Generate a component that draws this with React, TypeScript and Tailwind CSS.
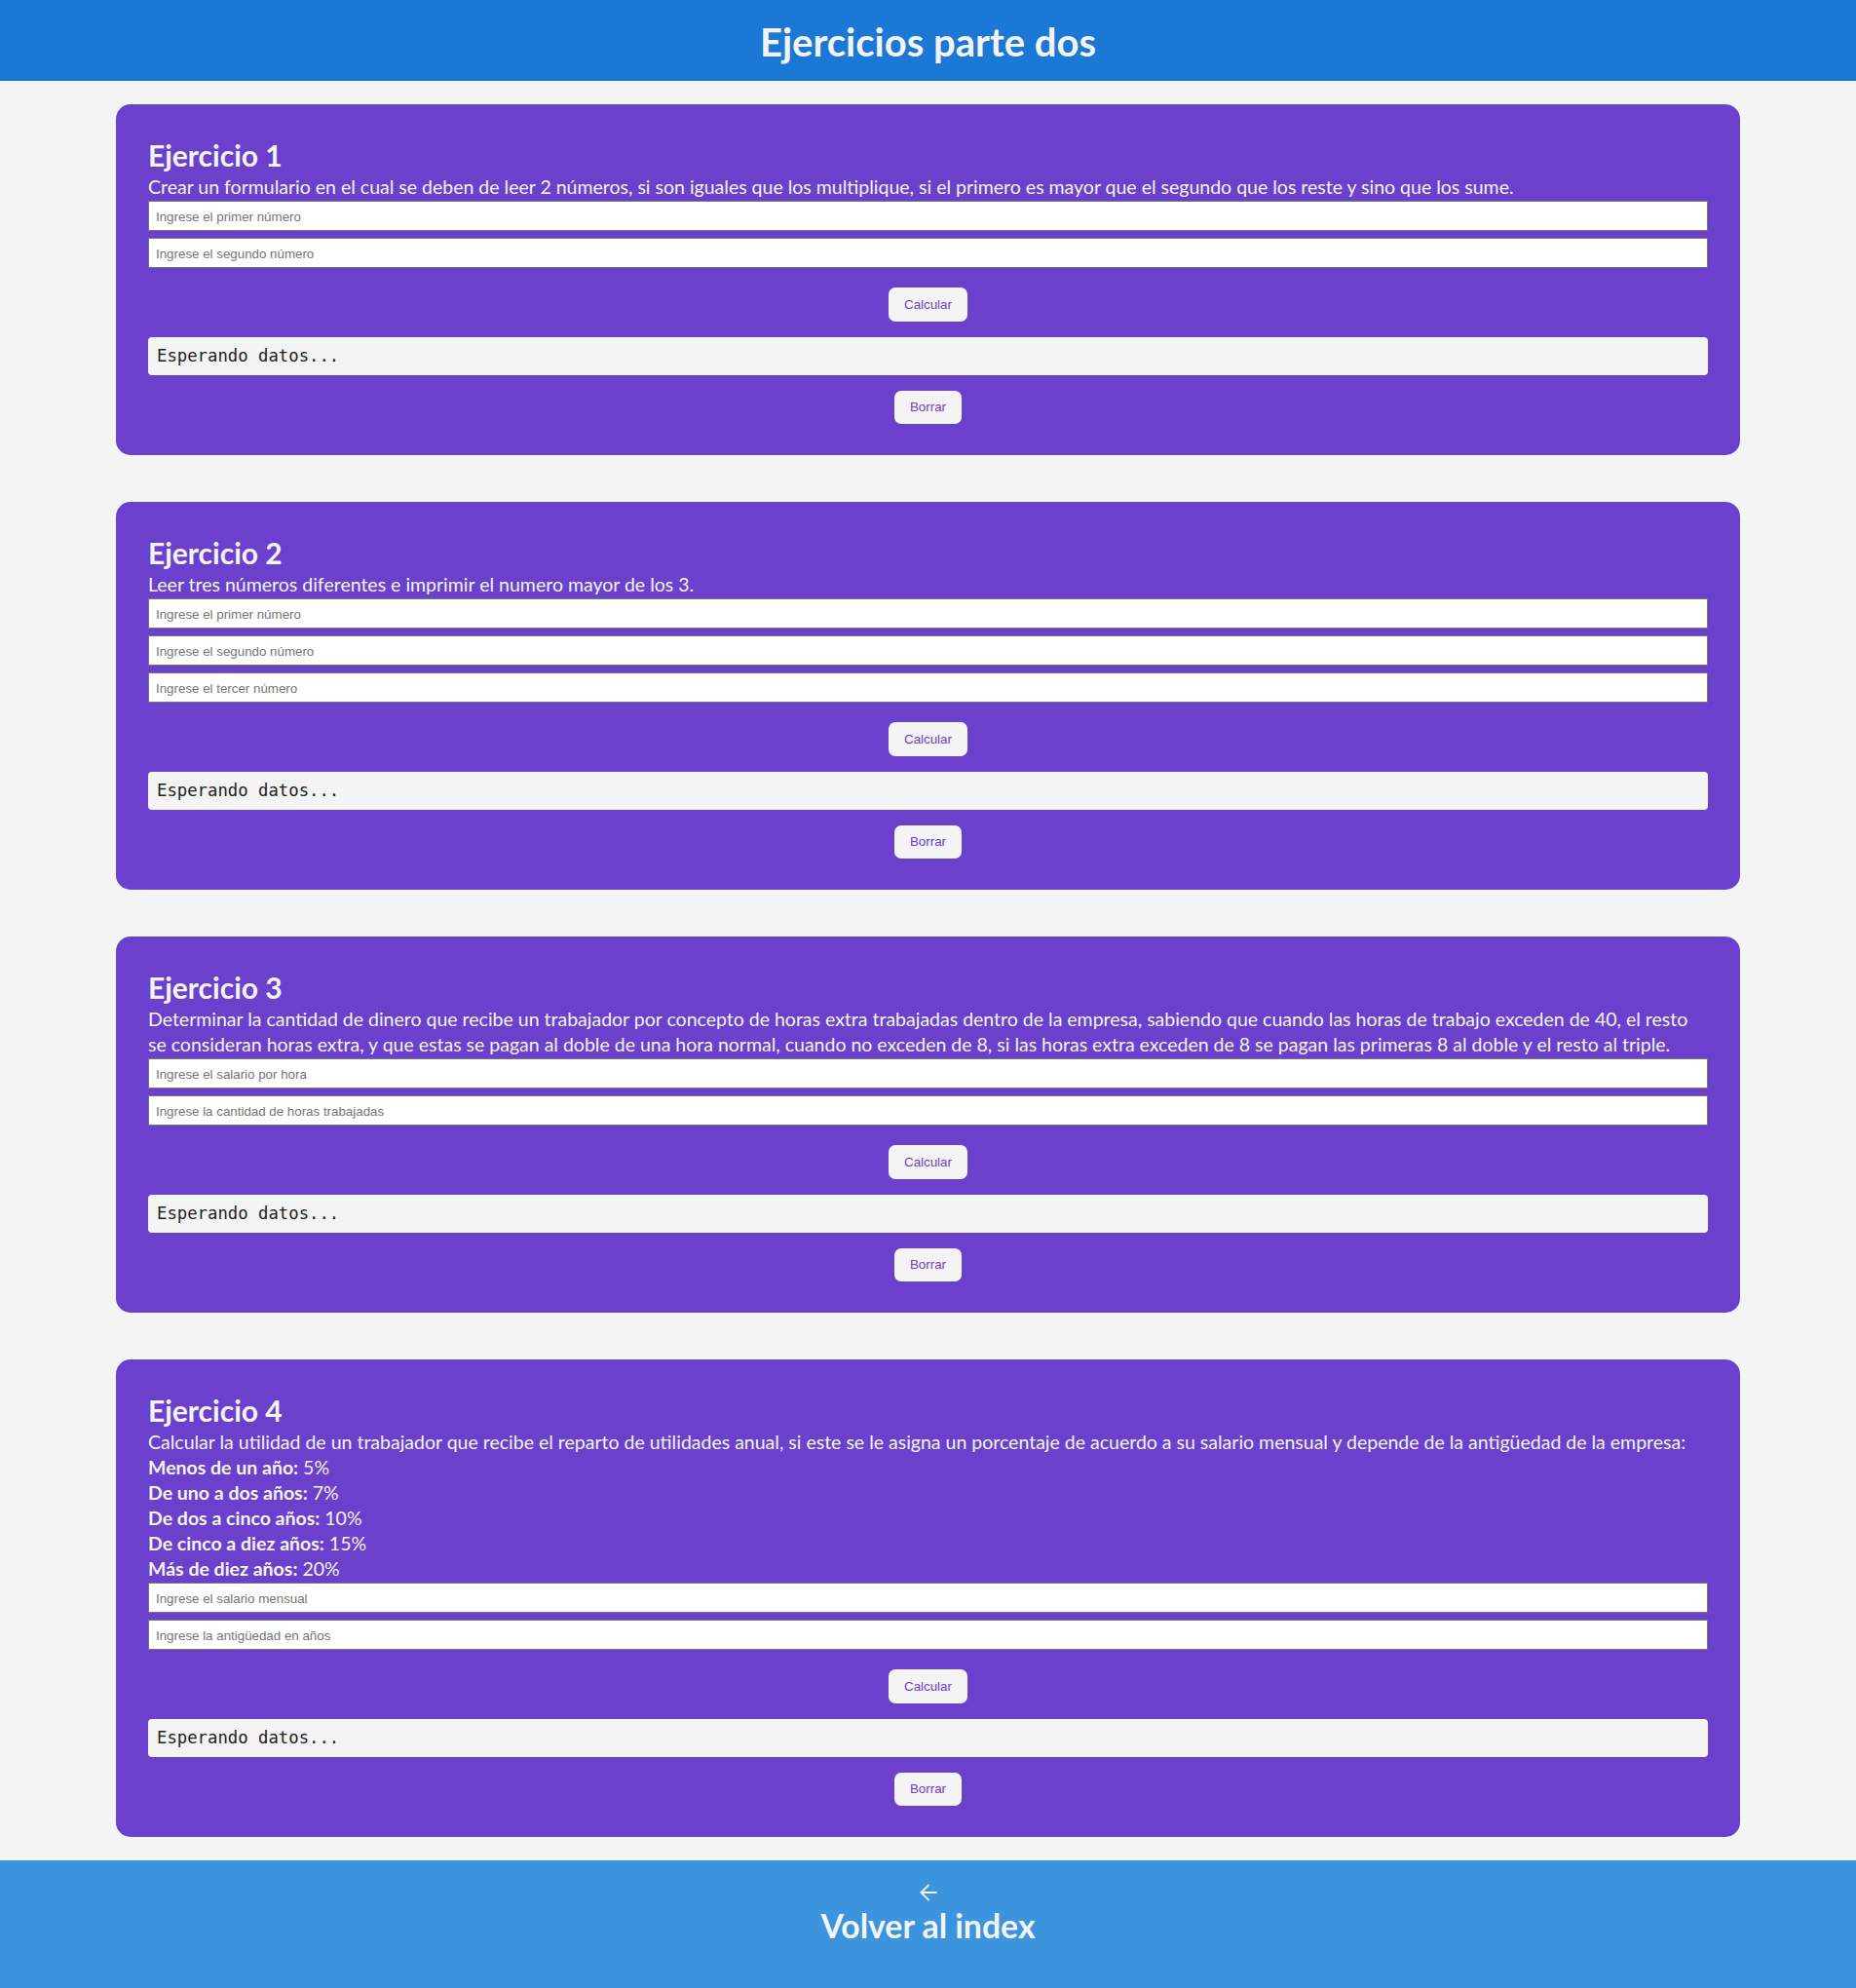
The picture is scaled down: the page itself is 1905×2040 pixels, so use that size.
import React from "react";

type Ex = {
  title: string;
  desc: React.ReactNode;
  inputs: string[];
};

const exercises: Ex[] = [
  {
    title: "Ejercicio 1",
    desc: (
      <p>
        Crear un formulario en el cual se deben de leer 2 números, si son iguales que los multiplique, si el primero es mayor que el segundo que los reste y sino que los sume.
      </p>
    ),
    inputs: ["Ingrese el primer número", "Ingrese el segundo número"],
  },
  {
    title: "Ejercicio 2",
    desc: <p>Leer tres números diferentes e imprimir el numero mayor de los 3.</p>,
    inputs: ["Ingrese el primer número", "Ingrese el segundo número", "Ingrese el tercer número"],
  },
  {
    title: "Ejercicio 3",
    desc: (
      <p>
        Determinar la cantidad de dinero que recibe un trabajador por concepto de horas extra trabajadas dentro de la empresa, sabiendo que cuando las horas de trabajo exceden de 40, el resto
        <br />
        se consideran horas extra, y que estas se pagan al doble de una hora normal, cuando no exceden de 8, si las horas extra exceden de 8 se pagan las primeras 8 al doble y el resto al triple.
      </p>
    ),
    inputs: ["Ingrese el salario por hora", "Ingrese la cantidad de horas trabajadas"],
  },
  {
    title: "Ejercicio 4",
    desc: (
      <p>
        Calcular la utilidad de un trabajador que recibe el reparto de utilidades anual, si este se le asigna un porcentaje de acuerdo a su salario mensual y depende de la antigüedad de la empresa:
        <br />
        <strong className="font-bold">Menos de un año:</strong> 5%
        <br />
        <strong className="font-bold">De uno a dos años:</strong> 7%
        <br />
        <strong className="font-bold">De dos a cinco años:</strong> 10%
        <br />
        <strong className="font-bold">De cinco a diez años:</strong> 15%
        <br />
        <strong className="font-bold">Más de diez años:</strong> 20%
      </p>
    ),
    inputs: ["Ingrese el salario mensual", "Ingrese la antigüedad en años"],
  },
];

function Card({ ex }: { ex: Ex }) {
  return (
    <section className="w-[1667px] mx-auto bg-[#6a40cc] rounded-[15px] px-[33px] pt-8 pb-8 text-[#f4f4f4] font-['Lato',sans-serif]">
      <h2 className="text-[30px] leading-[40px] font-bold">{ex.title}</h2>
      <div className="text-[19.5px] leading-[26px]">{ex.desc}</div>
      <div className="mt-[1px] flex flex-col gap-[7px]">
        {ex.inputs.map((ph, i) => (
          <input
            key={i}
            type="text"
            placeholder={ph}
            className="h-[31px] w-full bg-white border border-[#767676] px-[7px] pt-[1px] text-[13.33px] text-black placeholder:text-[#757575] font-['Liberation_Sans',Arial,sans-serif] outline-none"
          />
        ))}
      </div>
      <div className="mt-5 flex justify-center">
        <button className="h-[35px] px-4 rounded-[7px] bg-[#f4f4f4] text-[#6a40cc] text-[13.33px] font-['Liberation_Sans',Arial,sans-serif]">
          Calcular
        </button>
      </div>
      <div className="mt-4 h-[39px] rounded-[4px] bg-[#f4f4f4] pl-[9px] pt-[1px] flex items-center text-[17.3px] text-[#222222] font-['DejaVu_Sans_Mono','Liberation_Mono',monospace]">
        Esperando datos...
      </div>
      <div className="mt-4 flex justify-center">
        <button className="h-[34px] px-4 rounded-[7px] bg-[#f4f4f4] text-[#6a40cc] text-[13.33px] font-['Liberation_Sans',Arial,sans-serif]">
          Borrar
        </button>
      </div>
    </section>
  );
}

export default function App() {
  return (
    <div className="min-h-screen bg-[#f4f4f4] font-['Lato',sans-serif]">
      <header className="h-[83px] bg-[#1b78d4] flex items-center justify-center">
        <h1 className="pt-[3px] text-[40px] leading-[80px] font-bold text-[#f4f4f4]">Ejercicios parte dos</h1>
      </header>
      <main className="py-6 flex flex-col gap-12">
        {exercises.map((ex, i) => (
          <Card key={i} ex={ex} />
        ))}
      </main>
      <footer className="bg-[#3b94dd] pt-6 pb-[44px] flex flex-col items-center text-[#f4f4f4]">
        <svg width="18" height="18" viewBox="0 0 18 18" fill="none" stroke="currentColor" strokeWidth="1.8" strokeLinecap="round" strokeLinejoin="round">
          <path d="M17 9H1.5" />
          <path d="M9 1.5L1.5 9L9 16.5" />
        </svg>
        <a href="#" className="mt-[5px] text-[33.8px] leading-[40px] font-bold text-[#f4f4f4]">
          Volver al index
        </a>
      </footer>
    </div>
  );
}
